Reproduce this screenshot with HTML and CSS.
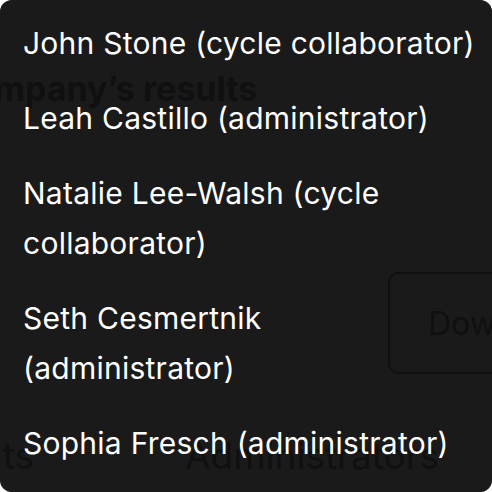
FILE: index.html
```html
<!DOCTYPE html>
<html lang="en">
<head>
  <meta charset="UTF-8">
  <meta name="viewport" content="width=device-width, initial-scale=1.0">
  <title>Results</title>
  <link rel="stylesheet" href="styles.css">
</head>
<body>
  <div class="screen">
    <div class="page">
      <h1 class="title">Company’s results</h1>
      <div class="actions">
        <button class="btn">Download</button>
      </div>
      <div class="tabs">
        <span class="tab">Participants</span>
        <span class="tab">Administrators</span>
      </div>
    </div>

    <ul class="menu">
      <li class="menu-item">John Stone (cycle collaborator)</li>
      <li class="menu-item">Leah Castillo (administrator)</li>
      <li class="menu-item">Natalie Lee-Walsh (cycle collaborator)</li>
      <li class="menu-item">Seth Cesmertnik (administrator)</li>
      <li class="menu-item">Sophia Fresch (administrator)</li>
    </ul>
  </div>
</body>
</html>
```

FILE: styles.css
```css
body {
  margin: 0;
  background: #fff;
  font-family: Inter, 'Noto Sans', sans-serif;
}
.screen {
  position: relative;
  width: 492px;
  height: 492px;
  background: #1b1b1b;
  border-radius: 12px;
  overflow: hidden;
}
.page {
  color: #000;
}
.title {
  margin: 0;
  padding-top: 69px;
  margin-left: -52px;
  font-size: 34px;
  font-weight: 700;
  line-height: 40px;
  white-space: nowrap;
}
.actions {
  display: flex;
  justify-content: flex-end;
  margin-top: 163px;
  margin-right: -120px;
}
.btn {
  width: 224px;
  height: 102px;
  padding: 0 38px;
  text-align: left;
  background: transparent;
  border: 2px solid #000;
  border-radius: 10px;
  font-family: inherit;
  font-size: 32px;
  color: #000;
}
.tabs {
  display: flex;
  gap: 151px;
  margin-top: 60px;
  margin-left: -173px;
  font-size: 37px;
  line-height: 44px;
  white-space: nowrap;
}
.menu {
  position: absolute;
  inset: 0;
  margin: 0;
  padding: 6px 17px 6px 23px;
  list-style: none;
  background: rgba(27, 27, 27, 0.6);
}
.menu-item {
  padding: 12px 0 13px;
  font-size: 30px;
  letter-spacing: 0.25px;
  line-height: 50px;
  color: #fff;
}
```
